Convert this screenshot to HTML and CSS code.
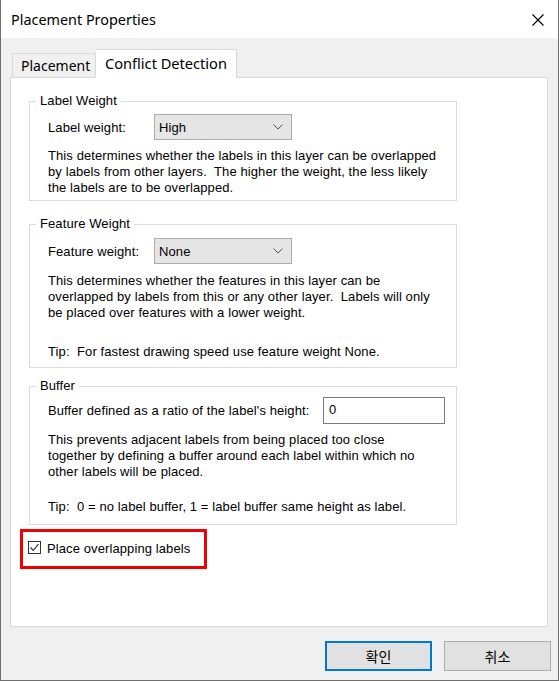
FILE: index.html
```html
<!DOCTYPE html>
<html>
<head>
  <title>Placement Properties</title>
  <link rel="stylesheet" href="styles.css">
</head>
<body>
  <div class="window">
    <div class="titlebar">
      <span class="title">Placement Properties</span>
      <svg class="close" width="12" height="12" viewBox="0 0 12 12">
        <path d="M0.5 0.5 L11.5 11.5 M11.5 0.5 L0.5 11.5" stroke="#000" stroke-width="1.1" fill="none"/>
      </svg>
    </div>
    <div class="dialog-body">
      <div class="tabs">
        <div class="tab">Placement</div>
        <div class="tab tab-active">Conflict Detection</div>
      </div>
      <div class="panel">
        <fieldset class="group group-label">
          <legend>Label Weight</legend>
          <div class="group-body">
            <div class="row">
              <span class="row-label">Label weight:</span>
              <div class="combo">
                <span>High</span>
                <svg width="10" height="6" viewBox="0 0 10 6"><path d="M0.5 0.5 L5 5 L9.5 0.5" stroke="#555" fill="none"/></svg>
              </div>
            </div>
            <p class="note">This determines whether the labels in this layer can be overlapped<br>by labels from other layers.&nbsp; The higher the weight, the less likely<br>the labels are to be overlapped.</p>
          </div>
        </fieldset>

        <fieldset class="group group-feature">
          <legend>Feature Weight</legend>
          <div class="group-body">
            <div class="row">
              <span class="row-label">Feature weight:</span>
              <div class="combo">
                <span>None</span>
                <svg width="10" height="6" viewBox="0 0 10 6"><path d="M0.5 0.5 L5 5 L9.5 0.5" stroke="#555" fill="none"/></svg>
              </div>
            </div>
            <p class="note">This determines whether the features in this layer can be<br>overlapped by labels from this or any other layer.&nbsp; Labels will only<br>be placed over features with a lower weight.</p>
            <p class="note tip">Tip:&nbsp; For fastest drawing speed use feature weight None.</p>
          </div>
        </fieldset>

        <fieldset class="group group-buffer">
          <legend>Buffer</legend>
          <div class="group-body">
            <div class="row">
              <span class="buffer-label">Buffer defined as a ratio of the label's height:</span>
              <div class="textbox">0</div>
            </div>
            <p class="note">This prevents adjacent labels from being placed too close<br>together by defining a buffer around each label within which no<br>other labels will be placed.</p>
            <p class="note tip">Tip:&nbsp; 0 = no label buffer, 1 = label buffer same height as label.</p>
          </div>
        </fieldset>

        <div class="highlight">
          <span class="checkbox">
            <svg width="11" height="11" viewBox="0 0 11 11"><path d="M1.5 5.5 L4.2 8.3 L9.5 2.2" stroke="#333" stroke-width="1.2" fill="none"/></svg>
          </span>
          <span class="check-text">Place overlapping labels</span>
        </div>
      </div>
      <div class="buttons">
        <div class="button button-default">확인</div>
        <div class="button">취소</div>
      </div>
    </div>
  </div>
</body>
</html>
```

FILE: styles.css
```css
body {
  margin: 0;
  background-color: #fff;
  font-family: "Liberation Sans", Arial, sans-serif;
  font-size: 13px;
  letter-spacing: 0.1px;
  color: #000;
}

.window {
  width: 557px;
  height: 680px;
  border: 1px solid #707070;
  border-top: none;
  display: flex;
  flex-direction: column;
}

.titlebar {
  height: 38px;
  background-color: #fff;
  display: flex;
  align-items: center;
  justify-content: space-between;
  padding: 0 14px 0 10px;
  flex-shrink: 0;
  letter-spacing: 0;
}

.title {
  font-family: "Noto Sans", sans-serif;
  font-size: 14.4px;
  margin-top: 1px;
}

.close {
  margin-top: 1px;
}

.dialog-body {
  flex: 1;
  background-color: #f0f0f0;
  padding: 0 0 0 9px;
}

.tabs {
  height: 39px;
  display: flex;
  align-items: flex-end;
  padding-left: 2px;
  position: relative;
  z-index: 1;
  letter-spacing: 0;
}

.tab {
  height: 24px;
  width: 84px;
  border: 1px solid #d9d9d9;
  border-bottom: none;
  background-color: #f0f0f0;
  font-family: "Noto Sans", sans-serif;
  font-size: 14px;
  line-height: 24px;
  padding-left: 8px;
  box-sizing: border-box;
}

.tab-active {
  height: 29px;
  width: 141px;
  margin-bottom: -1px;
  background-color: #fff;
  border-left: none;
  padding-left: 9px;
  line-height: 26px;
  font-size: 14.6px;
}

.panel {
  width: 536px;
  height: 532px;
  border: 1px solid #d9d9d9;
  background-color: #fff;
  padding-top: 16px;
}

.group {
  width: 426px;
  margin: 0 0 0 18px;
  padding: 0;
  border: 1px solid #dcdcdc;
}

.group legend {
  margin-left: 6px;
  padding: 0 4px;
  line-height: 14px;
}

.group-body {
  padding: 6px 0 4px 18px;
}

.group-feature {
  margin-top: 16px;
}

.group-feature .group-body {
  padding-top: 7px;
  padding-bottom: 7px;
}

.group-buffer {
  margin-top: 11px;
}

.group-buffer .group-body {
  padding-top: 4px;
  padding-bottom: 9px;
}

.row {
  display: flex;
  align-items: center;
}

.row-label {
  width: 106px;
}

.combo {
  width: 138px;
  height: 26px;
  border: 1px solid #acacac;
  background-color: #e5e5e5;
  display: flex;
  align-items: center;
  justify-content: space-between;
  padding: 0 8px 0 4px;
  box-sizing: border-box;
}

.buffer-label {
  width: 275px;
}

.textbox {
  width: 122px;
  height: 27px;
  box-sizing: border-box;
  border: 1px solid #7a7a7a;
  background-color: #fff;
  padding: 4px 0 0 5px;
}

.note {
  margin: 8px 0 0 0;
  line-height: 16px;
}

.group-feature .note {
  margin-top: 9px;
}

.group-feature .tip {
  margin-top: 23px;
}

.group-buffer .tip {
  margin-top: 19px;
}

.highlight {
  width: 176px;
  height: 34px;
  margin: 4px 0 0 9px;
  border: 3px solid #f00000;
  display: flex;
  align-items: center;
  gap: 6px;
  padding-left: 5px;
}

.checkbox {
  width: 11px;
  height: 11px;
  border: 1px solid #333;
  background-color: #fff;
  display: flex;
  margin-top: -3px;
}

.check-text {
  margin-top: -2px;
}

.buttons {
  display: flex;
  justify-content: flex-end;
  gap: 12px;
  margin-top: 14px;
  padding-right: 7px;
}

.button {
  width: 107px;
  height: 30px;
  box-sizing: border-box;
  border: 1px solid #adadad;
  background-color: #e1e1e1;
  font-family: "Noto Sans CJK KR", sans-serif;
  font-size: 14px;
  letter-spacing: 0;
  display: flex;
  align-items: center;
  justify-content: center;
}

.button-default {
  border: 2px solid #0078d7;
}
```
